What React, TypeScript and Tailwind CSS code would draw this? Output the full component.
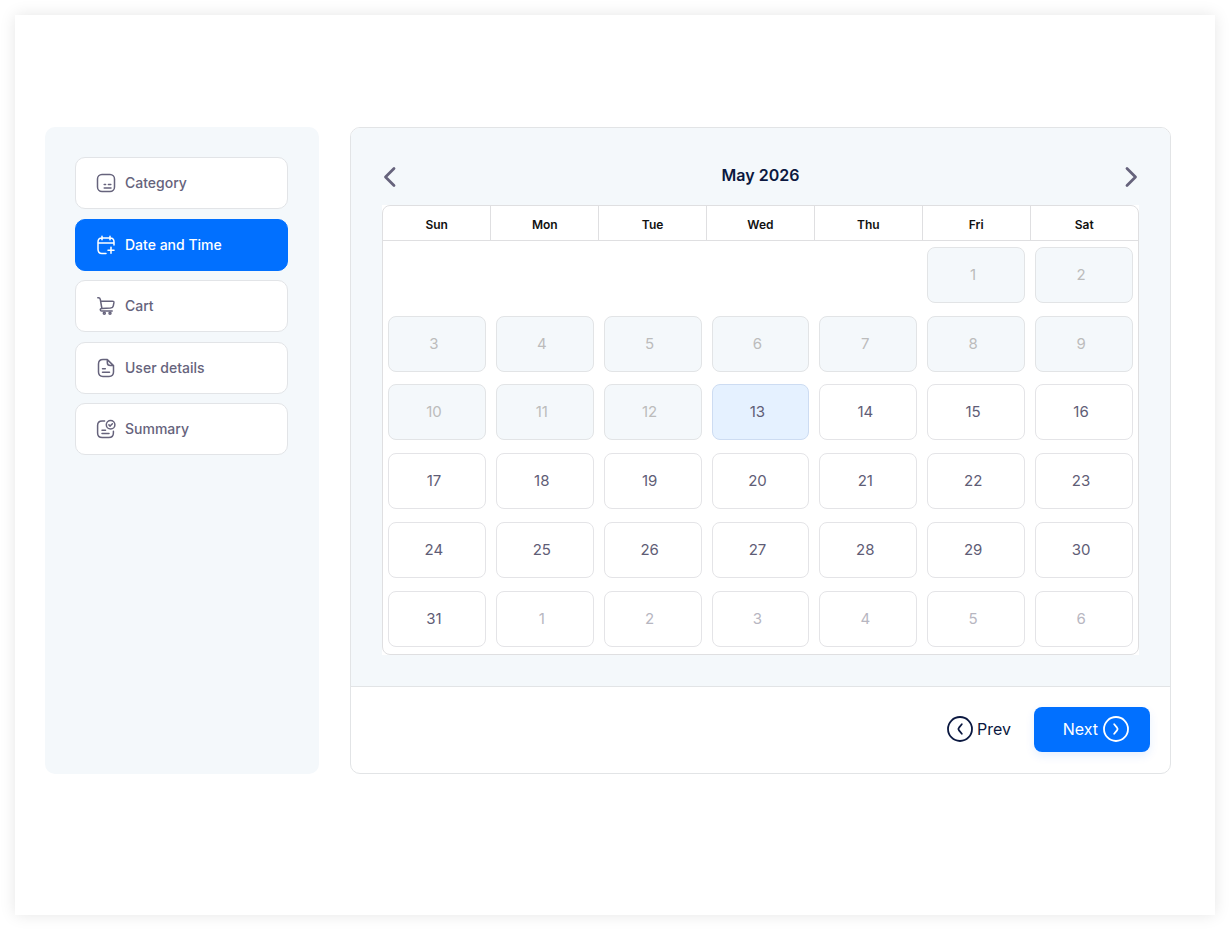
import type { ReactNode } from "react";

const stroke = {
  fill: "none",
  stroke: "currentColor",
  strokeWidth: 1.5,
  strokeLinecap: "round" as const,
  strokeLinejoin: "round" as const,
};

function Icon({ children }: { children: ReactNode }) {
  return (
    <svg viewBox="0 0 20 20" className="size-5 shrink-0" aria-hidden="true" {...stroke}>
      {children}
    </svg>
  );
}

const steps: { label: string; icon: ReactNode }[] = [
  {
    label: "Category",
    icon: (
      <Icon>
        <rect x="1.5" y="1.5" width="17" height="17" rx="4.5" />
        <path d="M8.2 11.4h1.4M12.4 11.4h2.4M8.2 14.9h6.8" />
      </Icon>
    ),
  },
  {
    label: "Date and Time",
    icon: (
      <Icon>
        <path d="M6 1.2v3.6M14 1.2v3.6M2 8h16M18 10V7c0-2.600-1.300-4-3.800-4H5.800C3.300 3 2 4.400 2 7v7.200c0 2.600 1.300 4.200 3.800 4.200H10M15 12.200v6M12 15.200h6" />
      </Icon>
    ),
  },
  {
    label: "Cart",
    icon: (
      <Icon>
        <path d="M1.800 1.800h.7c1 0 1.600.6 1.800 1.600l1.500 8.600M4.800 5.200h11.700c1 0 1.500.6 1.400 1.500l-.6 3.100c-.3 1.500-1.300 2.200-2.800 2.300l-8.700.3c-1.200.1-1.600.9-1.500 1.600.1.600.6 1 1.300 1h10.600" />
        <circle cx="8.300" cy="17.300" r="1" />
        <circle cx="14" cy="17.300" r="1" />
      </Icon>
    ),
  },
  {
    label: "User details",
    icon: (
      <Icon>
        <path d="M11.300 1.600H7c-3 0-4.500 1.600-4.500 4.400v8c0 2.800 1.500 4.400 4.500 4.400h6c3 0 4.500-1.600 4.500-4.400V7.600zM11.300 1.600v2.900c0 2 1.100 3.100 3.100 3.100h3.100M6.500 10.700h2.800M6.500 14.200h7" />
      </Icon>
    ),
  },
  {
    label: "Summary",
    icon: (
      <Icon>
        <path d="M8.600 2H6.200C3.200 2 1.600 3.500 1.600 6.400v7.600c0 2.900 1.600 4.500 4.600 4.500h6.600c3 0 4.600-1.600 4.600-4.500v-1.800M6 11.200h3.500M6 14.600h7" />
        <circle cx="14.600" cy="5.800" r="4.300" />
        <path d="M12.900 5.900l1.200 1.200 2.300-2.400" />
      </Icon>
    ),
  },
];

const weekdays = ["Sun", "Mon", "Tue", "Wed", "Thu", "Fri", "Sat"];
const firstWeekday = 5;
const daysInMonth = 31;
const today = 13;
const weeks = [0, 1, 2, 3, 4, 5];

function DayCell({ offset }: { offset: number }) {
  const number = offset - firstWeekday + 1;
  if (number < 1) return <td className="px-[5px]" />;
  const following = number > daysInMonth;
  const past = number < today;
  const tone = following
    ? "bg-white border-[#e4e4e7] text-[#b7b6c1]"
    : past
      ? "bg-[#f4f8fb] border-[#e2e4e6] text-[#bcbcbc]"
      : number === today
        ? "bg-[#e5f1ff] border-[#cddcf2] text-[#5f5d76]"
        : "bg-white border-[#e4e4e7] text-[#5f5d76]";
  return (
    <td className="px-[5px] py-0">
      <button
        type="button"
        disabled={past}
        className={`block h-14 w-full rounded-lg border pr-1.5 text-[15px] leading-5 ${tone}`}
      >
        {following ? number - daysInMonth : number}
      </button>
    </td>
  );
}

export default function App() {
  return (
    <div className="min-h-screen bg-white p-[15px] font-['Inter',sans-serif]">
      <div className="flex min-h-[900px] items-start gap-[31px] bg-white pt-28 pr-11 pl-[30px] shadow-[0_0_15px_rgba(0,0,0,0.1)]">
        <nav className="w-[274px] shrink-0">
          <div className="min-h-[647px] rounded-[10px] bg-[#f4f8fb] pt-[30px] pr-[31px] pl-[30px]">
            <ul className="flex h-[298px] flex-col justify-between">
              {steps.map((step, i) => (
                <li key={step.label}>
                  <button
                    type="button"
                    aria-current={i === 1 ? "step" : undefined}
                    className={`flex h-[52px] w-full items-center gap-[9px] rounded-[10px] border px-5 text-[14px] leading-5 font-medium ${
                      i === 1
                        ? "border-[#0170ff] bg-[#0170ff] text-white"
                        : "border-[#e2e4e7] bg-white text-[#66637c]"
                    }`}
                  >
                    {step.icon}
                    <span>{step.label}</span>
                  </button>
                </li>
              ))}
            </ul>
          </div>
        </nav>

        <main className="min-w-0 flex-1 overflow-hidden rounded-[10px] border border-[#e2e4e6] bg-white">
          <section className="border-b border-[#e2e4e6] bg-[#f4f8fb] px-[31px] pb-[31px]">
            <header className="flex h-[77px] items-center justify-between pt-5">
              <button type="button" aria-label="Previous month" className="text-[#66637c]">
                <svg viewBox="0 0 16 24" className="h-6 w-4" {...stroke} strokeWidth={2.8}>
                  <path d="M12 3.500 3.500 12l8.500 8.500" />
                </svg>
              </button>
              <h1 className="pb-1 text-[16px] leading-6 font-semibold text-[#0b1840]">May 2026</h1>
              <button type="button" aria-label="Next month" className="text-[#66637c]">
                <svg viewBox="0 0 16 24" className="h-6 w-4" {...stroke} strokeWidth={2.8}>
                  <path d="M4 3.500 12.500 12 4 20.500" />
                </svg>
              </button>
            </header>
            <div className="bg-white">
              <div className="rounded-lg border border-[#dfdfe1] pb-px">
                <table className="h-[447px] w-full table-fixed border-collapse">
                  <thead>
                    <tr className="h-[34px]">
                      {weekdays.map((day) => (
                        <th
                          key={day}
                          scope="col"
                          className="h-[34px] border-r border-b border-[#dfdfe1] p-0 pt-1 text-[12px] leading-5 font-semibold text-[#111111] last:border-r-0"
                        >
                          {day}
                        </th>
                      ))}
                    </tr>
                  </thead>
                  <tbody>
                    {weeks.map((week) => (
                      <tr key={week}>
                        {weekdays.map((day, i) => (
                          <DayCell key={day} offset={week * 7 + i} />
                        ))}
                      </tr>
                    ))}
                  </tbody>
                </table>
              </div>
            </div>
          </section>
          <footer className="flex h-[86px] items-center justify-end gap-[23px] pr-5 pb-0.5">
            <button type="button" className="flex items-center gap-1 text-[16px] leading-6 text-[#0b1840]">
              <svg viewBox="0 0 26 26" className="size-[26px]" {...stroke} strokeWidth={1.8}>
                <circle cx="13" cy="13" r="12" />
                <path d="M14.800 8.200 12 11.600c-.8.900-.8 1.900 0 2.800l2.800 3.400" />
              </svg>
              Prev
            </button>
            <button
              type="button"
              className="flex h-[45px] w-[116px] items-center justify-end gap-[5px] rounded-lg bg-[#0170ff] pr-[21px] text-[16px] leading-6 text-white shadow-[0_4px_10px_rgba(1,112,255,0.1)]"
            >
              Next
              <svg viewBox="0 0 26 26" className="size-[26px]" {...stroke} strokeWidth={1.8}>
                <circle cx="13" cy="13" r="12" />
                <path d="M11.200 8.200 14 11.600c.8.900.8 1.900 0 2.800l-2.800 3.400" />
              </svg>
            </button>
          </footer>
        </main>
      </div>
    </div>
  );
}
